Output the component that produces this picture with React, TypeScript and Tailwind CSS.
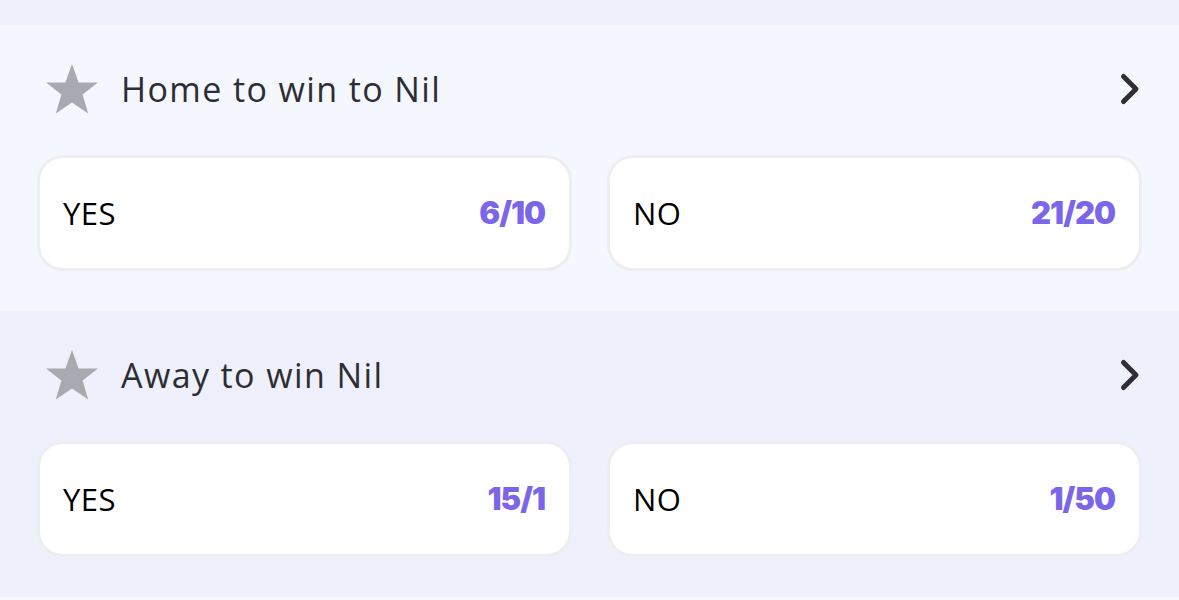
import React from 'react';

interface Market {
  title: string;
  options: { label: string; odds: string }[];
}

const markets: Market[] = [
  {
    title: 'Home to win to Nil',
    options: [
      { label: 'YES', odds: '6/10' },
      { label: 'NO', odds: '21/20' },
    ],
  },
  {
    title: 'Away to win Nil',
    options: [
      { label: 'YES', odds: '15/1' },
      { label: 'NO', odds: '1/50' },
    ],
  },
];

function Star() {
  return (
    <svg width="54" height="52" viewBox="0 0 54 52" className="shrink-0">
      <polygon
        points="27,1 33.6,19.4 53,19.6 37.6,31.6 43.2,50.5 27,39.4 10.8,50.5 16.4,31.6 1,19.6 20.4,19.4"
        fill="#a9a9b1"
      />
    </svg>
  );
}

function Chevron() {
  return (
    <svg width="22" height="34" viewBox="0 0 22 34" className="shrink-0">
      <polyline
        points="4.5,4.5 17,17 4.5,29.5"
        fill="none"
        stroke="#2f2f33"
        strokeWidth="5"
        strokeLinecap="round"
        strokeLinejoin="round"
      />
    </svg>
  );
}

function MarketSection({ market, light }: { market: Market; light: boolean }) {
  return (
    <section className={`${light ? 'bg-[#f4f7fe]' : 'bg-[#eef0fb]'} px-[37px] pt-[37px] pb-[40px]`}>
      <div className="flex items-center h-[54px] pl-[8px] pr-[1px]">
        <Star />
        <h3 className="ml-[22px] flex-1 text-[34px] text-[#2d2d33] font-['Open_Sans',sans-serif] tracking-[1.4px]">
          {market.title}
        </h3>
        <Chevron />
      </div>
      <div className="grid grid-cols-2 gap-[35px] mt-[39px]">
        {market.options.map((o) => (
          <div
            key={o.label}
            className="h-[116px] rounded-[26px] bg-white border-[3px] border-[#eeeef1] flex items-center justify-between pl-[23px] pr-[24px]"
          >
            <span className="text-[31px] text-black font-['Open_Sans',sans-serif] tracking-[0.5px]">{o.label}</span>
            <span className="text-[31px] font-black text-[#7b66ea] font-['Inter',sans-serif] tracking-[-1px]">
              {o.odds}
            </span>
          </div>
        ))}
      </div>
    </section>
  );
}

export default function App() {
  return (
    <div className="min-h-screen w-full bg-[#f4f7fe]">
      <div className="h-[25px] bg-[#eef0fb]" />
      {markets.map((m, i) => (
        <MarketSection key={m.title} market={m} light={i % 2 === 0} />
      ))}
    </div>
  );
}
